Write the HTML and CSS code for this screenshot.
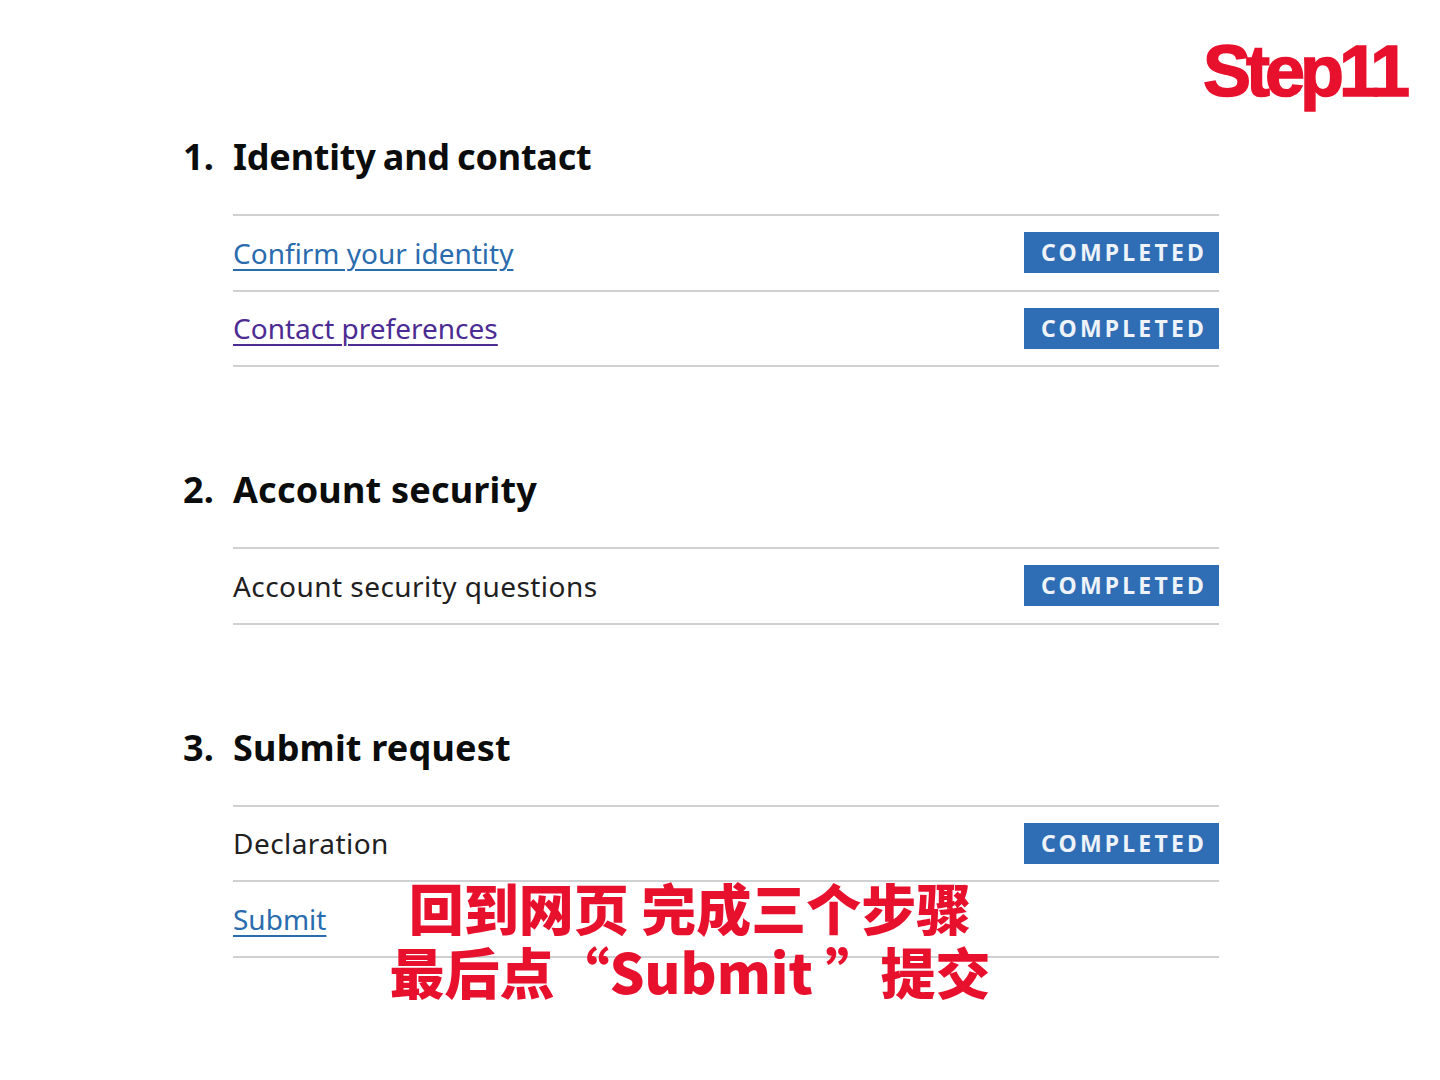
FILE: index.html
```html
<!DOCTYPE html>
<html lang="en">
<head>
<meta charset="utf-8">
<title>Task list</title>
<link rel="stylesheet" href="styles.css">
</head>
<body>
<div class="page">
  <div class="step-label">Step11</div>
  <main class="tasks">
    <section class="section">
      <h2 class="heading"><span class="num">1.</span><span class="tight">Identity and contact</span></h2>
      <ul class="items">
        <li class="item"><a class="link" href="#">Confirm your identity</a><strong class="tag">COMPLETED</strong></li>
        <li class="item"><a class="link visited" href="#">Contact preferences</a><strong class="tag">COMPLETED</strong></li>
      </ul>
    </section>
    <section class="section">
      <h2 class="heading"><span class="num">2.</span><span>Account security</span></h2>
      <ul class="items">
        <li class="item"><span class="name">Account security questions</span><strong class="tag">COMPLETED</strong></li>
      </ul>
    </section>
    <section class="section">
      <h2 class="heading"><span class="num">3.</span><span>Submit request</span></h2>
      <ul class="items">
        <li class="item"><span class="name">Declaration</span><strong class="tag">COMPLETED</strong></li>
        <li class="item"><a class="link" href="#">Submit</a></li>
      </ul>
    </section>
  </main>
  <div class="caption">
    <div class="caption-line">回到网页 完成三个步骤</div>
    <div class="caption-line">最后点“Submit ”提交</div>
  </div>
</div>
</body>
</html>
```

FILE: styles.css
```css
html, body {
  margin: 0;
  padding: 0;
  background: #ffffff;
}

body {
  font-family: "Noto Sans", "Liberation Sans", Arial, sans-serif;
  color: #0b0c0c;
}

.page {
  position: relative;
  width: 1440px;
  height: 1080px;
  overflow: hidden;
}

.step-label {
  position: absolute;
  left: 1203px;
  top: 26px;
  font-family: "Liberation Sans", Arial, sans-serif;
  font-weight: 700;
  font-size: 72px;
  letter-spacing: -5px;
  line-height: 90px;
  color: #e8112d;
  -webkit-text-stroke: 1.5px #e8112d;
}

.tasks {
  padding: 137px 0 0 183px;
  width: 1036px;
}

.section {
  margin-bottom: 103px;
}

.heading {
  display: flex;
  margin: 0 0 37px 0;
  font-family: "Noto Sans", "Liberation Sans", Arial, sans-serif;
  font-weight: 700;
  font-size: 36px;
  line-height: 40px;
  letter-spacing: 0.2px;
  color: #0b0c0c;
}

.tight {
  letter-spacing: -0.2px;
  word-spacing: -2px;
}

.num {
  width: 50px;
  flex: none;
}

.items {
  list-style: none;
  margin: 0 0 0 50px;
  padding: 0;
  border-top: 2px solid #cfd0d1;
}

.item {
  display: flex;
  align-items: center;
  justify-content: space-between;
  height: 73.5px;
  border-bottom: 2px solid #cfd0d1;
  font-size: 28px;
  line-height: 32px;
}

.link {
  color: #2a6cae;
  text-decoration: underline;
  text-decoration-thickness: 2px;
  text-underline-offset: 5px;
}

.link.visited {
  color: #4c2c92;
}

.name {
  color: #1f2021;
  letter-spacing: 0.45px;
}

.tag {
  display: inline-block;
  height: 41px;
  line-height: 41px;
  padding: 0 12px 0 17px;
  background: #2f6db5;
  color: #eef3fa;
  font-family: "Noto Sans", "Liberation Sans", Arial, sans-serif;
  font-weight: 700;
  font-size: 23px;
  letter-spacing: 3.2px;
}

.caption {
  position: absolute;
  left: 340px;
  top: 874px;
  width: 700px;
  text-align: center;
  font-family: "Noto Sans CJK SC", "Liberation Sans", sans-serif;
  font-weight: 900;
  font-size: 55px;
  line-height: 64px;
  color: #e8112d;
  letter-spacing: 0;
}

.caption-line {
  white-space: nowrap;
}
```
